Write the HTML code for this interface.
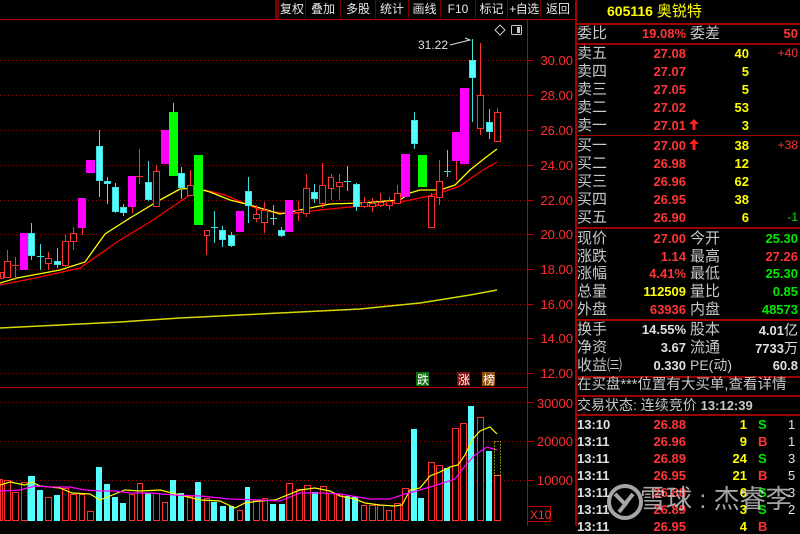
<!DOCTYPE html>
<html><head><meta charset="utf-8"><style>
*{margin:0;padding:0;box-sizing:border-box}
body{width:800px;height:526px;background:#000;overflow:hidden;position:relative;font-family:"Liberation Sans","Noto Sans CJK SC",sans-serif}
.t{position:absolute;white-space:nowrap;line-height:1}
.lb{color:#c8c8c8;font-size:15px}
.n{font-weight:bold;font-size:13px;text-align:right}
.r{color:#ff3535}.y{color:#ffff00}.g{color:#00e800}.w{color:#e0e0e0}
.hl{position:absolute;left:575px;width:225px;height:2px;background:#a00000}
.tb{position:absolute;top:0;height:19px;color:#e8e8e8;font-size:12px;line-height:19px;text-align:center;border-left:1px solid #700000;white-space:nowrap;overflow:hidden}
</style></head><body>
<svg width="575" height="526" style="position:absolute;left:0;top:0" xmlns="http://www.w3.org/2000/svg">
<g stroke="#a00000" stroke-width="1" stroke-dasharray="1 3">
<line x1="0" y1="60.5" x2="527" y2="60.5"/><line x1="0" y1="95.5" x2="527" y2="95.5"/><line x1="0" y1="130.5" x2="527" y2="130.5"/><line x1="0" y1="165.5" x2="527" y2="165.5"/><line x1="0" y1="200.5" x2="527" y2="200.5"/><line x1="0" y1="234.5" x2="527" y2="234.5"/><line x1="0" y1="269.5" x2="527" y2="269.5"/><line x1="0" y1="304.5" x2="527" y2="304.5"/><line x1="0" y1="338.5" x2="527" y2="338.5"/><line x1="0" y1="373.5" x2="527" y2="373.5"/>
<line x1="0" y1="402.5" x2="527" y2="402.5"/><line x1="0" y1="441.5" x2="527" y2="441.5"/><line x1="0" y1="480.5" x2="527" y2="480.5"/>
</g>
<line x1="0" y1="19.5" x2="575" y2="19.5" stroke="#c00000"/>
<line x1="0" y1="387.5" x2="527" y2="387.5" stroke="#c00000"/>
<line x1="527.5" y1="19" x2="527.5" y2="526" stroke="#c00000"/>
<rect x="275" y="0" width="3" height="19" fill="#800000"/>
<g stroke="#c00000"><line x1="527" y1="60.5" x2="533" y2="60.5"/><line x1="527" y1="95.5" x2="533" y2="95.5"/><line x1="527" y1="130.5" x2="533" y2="130.5"/><line x1="527" y1="165.5" x2="533" y2="165.5"/><line x1="527" y1="200.5" x2="533" y2="200.5"/><line x1="527" y1="234.5" x2="533" y2="234.5"/><line x1="527" y1="269.5" x2="533" y2="269.5"/><line x1="527" y1="304.5" x2="533" y2="304.5"/><line x1="527" y1="338.5" x2="533" y2="338.5"/><line x1="527" y1="373.5" x2="533" y2="373.5"/><line x1="527" y1="402.5" x2="533" y2="402.5"/><line x1="527" y1="441.5" x2="533" y2="441.5"/><line x1="527" y1="480.5" x2="533" y2="480.5"/></g>
<g fill="#ff3030" font-family="Liberation Sans" font-size="13" text-anchor="end">
<text x="573" y="65">30.00</text><text x="573" y="100">28.00</text><text x="573" y="135">26.00</text><text x="573" y="170">24.00</text><text x="573" y="205">22.00</text><text x="573" y="239">20.00</text><text x="573" y="274">18.00</text><text x="573" y="309">16.00</text><text x="573" y="343">14.00</text><text x="573" y="378">12.00</text>
<text x="573" y="408">30000</text><text x="573" y="446">20000</text><text x="573" y="485">10000</text>
</g>
<rect x="527.5" y="506.5" width="23" height="15" fill="none" stroke="#c00000"/>
<text x="530" y="519" fill="#ff3030" font-size="12" font-family="Liberation Sans">X10</text>
<polyline fill="none" stroke="#d8d800" stroke-width="1.5" points="0,328 60,325 120,322 180,318 240,315 300,312 360,309 420,303 470,295 497,290"/>
<polyline fill="none" stroke="#ff0000" stroke-width="1.3" points="0,285 40,277 80,268 120,240 150,222 175,205 190,195 205,190 225,195 260,210 290,214 320,210 350,207 380,205 400,202 420,198 440,193 460,186 480,172 497,162"/>
<polyline fill="none" stroke="#ffff00" stroke-width="1.3" points="0,283 17,278 60,270 85,262 105,234 130,218 160,200 180,189 195,188 210,192 230,200 250,205 280,214 300,210 330,204 360,203 400,200 410,193 420,190 440,190 455,185 470,170 485,158 497,149"/>
<g stroke-width="1">
<g stroke="#ff3030" fill="#000">
<rect x="0.5" y="272.5" width="3" height="6"/>
<line x1="7.5" y1="250" x2="7.5" y2="261"/><rect x="4.5" y="261.5" width="6" height="16"/>
<line x1="15.5" y1="257" x2="15.5" y2="280"/><line x1="12" y1="265.5" x2="19" y2="265.5"/>
<line x1="48.5" y1="252" x2="48.5" y2="270"/><rect x="45.5" y="258.5" width="6" height="5"/>
<line x1="65.5" y1="235" x2="65.5" y2="267"/><rect x="62.5" y="241.5" width="6" height="24"/>
<line x1="73.5" y1="227" x2="73.5" y2="250"/><rect x="70.5" y="233.5" width="6" height="8"/>
<line x1="82.5" y1="228" x2="82.5" y2="235"/>
<line x1="132.5" y1="207" x2="132.5" y2="213"/>
<line x1="139.5" y1="149" x2="139.5" y2="184"/><line x1="136" y1="176.5" x2="143" y2="176.5"/>
<line x1="156.5" y1="165" x2="156.5" y2="206"/><rect x="153.5" y="171.5" width="6" height="35"/>
<line x1="190.5" y1="170" x2="190.5" y2="195"/><rect x="187.5" y="185.5" width="6" height="10"/>
<line x1="206.5" y1="235" x2="206.5" y2="255"/><rect x="204.5" y="230.5" width="5" height="5"/>
<line x1="256.5" y1="205" x2="256.5" y2="222"/><rect x="253.5" y="214.5" width="6" height="4"/>
<line x1="264.5" y1="202" x2="264.5" y2="233"/><rect x="261.5" y="210.5" width="6" height="12"/>
<line x1="298.5" y1="201" x2="298.5" y2="221"/><rect x="295.5" y="210.5" width="6" height="2"/>
<line x1="306.5" y1="174" x2="306.5" y2="217"/><rect x="303.5" y="188.5" width="6" height="25"/>
<line x1="322.5" y1="163" x2="322.5" y2="208"/><rect x="319.5" y="185.5" width="6" height="18"/>
<line x1="331.5" y1="174" x2="331.5" y2="200"/><rect x="328.5" y="177.5" width="5" height="11"/>
<line x1="339.5" y1="174" x2="339.5" y2="200"/><rect x="336.5" y="182.5" width="6" height="4"/>
<line x1="364.5" y1="197" x2="364.5" y2="208"/><rect x="361.5" y="202.5" width="6" height="4"/>
<line x1="372.5" y1="198" x2="372.5" y2="212"/><rect x="369.5" y="203.5" width="6" height="3"/>
<line x1="380.5" y1="193" x2="380.5" y2="207"/><rect x="378.5" y="202.5" width="5" height="3"/>
<line x1="389.5" y1="197" x2="389.5" y2="210"/><rect x="386.5" y="201.5" width="6" height="4"/>
<line x1="397.5" y1="185" x2="397.5" y2="203"/><rect x="394.5" y="193.5" width="6" height="10"/>
<line x1="431.5" y1="193" x2="431.5" y2="228"/><rect x="428.5" y="196.5" width="6" height="31"/>
<line x1="439.5" y1="160" x2="439.5" y2="205"/><rect x="436.5" y="181.5" width="6" height="16"/>
<line x1="456.5" y1="161" x2="456.5" y2="180"/>
<line x1="480.5" y1="43" x2="480.5" y2="135"/><rect x="477.5" y="95.5" width="6" height="33"/>
<line x1="497.5" y1="108" x2="497.5" y2="141"/><rect x="494.5" y="112.5" width="6" height="29"/>
</g>
<g fill="#ff00ff">
<rect x="20" y="233" width="8" height="37"/><rect x="78" y="198" width="8" height="30"/><rect x="86" y="160" width="9" height="13"/><rect x="128" y="176" width="8" height="31"/><rect x="161" y="130" width="8" height="34"/><rect x="236" y="211" width="8" height="21"/><rect x="285" y="200" width="8" height="32"/><rect x="401" y="154" width="9" height="43"/><rect x="452" y="132" width="8" height="29"/><rect x="460" y="88" width="9" height="76"/>
</g>
<g fill="#00ff00"><rect x="169" y="112" width="9" height="64"/><rect x="194" y="155" width="9" height="70"/><rect x="418" y="155" width="9" height="32"/></g>
<g stroke="#40e0e0" fill="#54ffff">
<line x1="31.5" y1="223" x2="31.5" y2="260"/><rect x="28.5" y="233.5" width="6" height="22"/>
<line x1="40.5" y1="244" x2="40.5" y2="270"/><line x1="37" y1="256.5" x2="44" y2="256.5"/>
<line x1="57.5" y1="248" x2="57.5" y2="268"/><rect x="54.5" y="261.5" width="6" height="3"/>
<line x1="99.5" y1="130" x2="99.5" y2="197"/><rect x="96.5" y="146.5" width="6" height="34"/>
<line x1="107.5" y1="177" x2="107.5" y2="204"/><rect x="104.5" y="181.5" width="6" height="2"/>
<line x1="115.5" y1="183" x2="115.5" y2="213"/><rect x="112.5" y="187.5" width="6" height="24"/>
<line x1="123.5" y1="204" x2="123.5" y2="216"/><rect x="120.5" y="207.5" width="6" height="5"/>
<line x1="148.5" y1="161" x2="148.5" y2="201"/><rect x="145.5" y="182.5" width="6" height="17"/>
<line x1="173.5" y1="103" x2="173.5" y2="112"/>
<line x1="181.5" y1="167" x2="181.5" y2="199"/><rect x="178.5" y="173.5" width="6" height="14"/>
<line x1="214.5" y1="211" x2="214.5" y2="243"/><line x1="211" y1="227.5" x2="218" y2="227.5"/>
<line x1="222.5" y1="226" x2="222.5" y2="247"/><rect x="219.5" y="230.5" width="6" height="9"/>
<line x1="231.5" y1="232" x2="231.5" y2="247"/><rect x="228.5" y="235.5" width="6" height="10"/>
<line x1="248.5" y1="177" x2="248.5" y2="223"/><rect x="245.5" y="191.5" width="6" height="14"/>
<line x1="273.5" y1="205" x2="273.5" y2="225"/><line x1="270" y1="218.5" x2="277" y2="218.5"/>
<line x1="281.5" y1="227" x2="281.5" y2="237"/><rect x="278.5" y="230.5" width="6" height="5"/>
<line x1="314.5" y1="184" x2="314.5" y2="203"/><rect x="311.5" y="192.5" width="6" height="6"/>
<line x1="347.5" y1="166" x2="347.5" y2="191"/><line x1="344" y1="181.5" x2="351" y2="181.5"/>
<line x1="356.5" y1="183" x2="356.5" y2="211"/><rect x="353.5" y="184.5" width="6" height="22"/>
<line x1="414.5" y1="112" x2="414.5" y2="149"/><rect x="411.5" y="120.5" width="6" height="23"/>
<line x1="447.5" y1="150" x2="447.5" y2="177"/><line x1="444" y1="171.5" x2="451" y2="171.5"/>
<line x1="472.5" y1="39" x2="472.5" y2="122"/><rect x="469.5" y="60.5" width="6" height="17"/>
<line x1="489.5" y1="109" x2="489.5" y2="139"/><rect x="486.5" y="122.5" width="6" height="9"/>
</g>
</g>
<text x="418" y="49" fill="#e0e0e0" font-size="12" font-family="Liberation Sans">31.22</text>
<polyline points="450,45 470,40 465,38" fill="none" stroke="#e0e0e0"/>
<path d="M500,25 L505,30 L500,35 L495,30 Z" fill="none" stroke="#c8c8c8"/>
<rect x="511.5" y="25.5" width="10" height="9" fill="#000" stroke="#c8c8c8" rx="1"/><rect x="517" y="27" width="3" height="6" fill="#c8c8c8"/>
<rect x="416" y="372" width="13" height="14" fill="#107010"/><text x="417" y="384" fill="#fff" font-size="12">跌</text>
<rect x="457" y="372" width="13" height="14" fill="#801010"/><text x="458" y="384" fill="#fff" font-size="12">涨</text>
<rect x="482" y="372" width="13" height="14" fill="#905010"/><text x="483" y="384" fill="#fff" font-size="12">榜</text>
<g stroke="#ff3030" fill="#000">
<rect x="0.5" y="479.5" width="2" height="41"/><rect x="4.5" y="480.5" width="6" height="40"/><rect x="12.5" y="492.5" width="6" height="28"/><rect x="21.5" y="482.5" width="6" height="38"/><rect x="45.5" y="497.5" width="6" height="23"/><rect x="62.5" y="488.5" width="6" height="32"/><rect x="70.5" y="494.5" width="6" height="26"/><rect x="79.5" y="494.5" width="5" height="26"/><rect x="87.5" y="511.5" width="6" height="9"/><rect x="129.5" y="494.5" width="5" height="26"/><rect x="137.5" y="483.5" width="5" height="37"/><rect x="153.5" y="493.5" width="6" height="27"/><rect x="162.5" y="502.5" width="5" height="18"/><rect x="187.5" y="496.5" width="5" height="24"/><rect x="204.5" y="498.5" width="5" height="22"/><rect x="237.5" y="510.5" width="5" height="10"/><rect x="253.5" y="500.5" width="6" height="20"/><rect x="262.5" y="498.5" width="5" height="22"/><rect x="286.5" y="483.5" width="6" height="37"/>
<rect x="296.5" y="489.5" width="6" height="31"/><rect x="304.5" y="485.5" width="6" height="35"/><rect x="320.5" y="486.5" width="6" height="34"/><rect x="328.5" y="493.5" width="6" height="27"/><rect x="336.5" y="494.5" width="6" height="26"/><rect x="361.5" y="505.5" width="5" height="15"/><rect x="369.5" y="505.5" width="6" height="15"/><rect x="377.5" y="505.5" width="6" height="15"/><rect x="386.5" y="510.5" width="5" height="10"/><rect x="394.5" y="503.5" width="6" height="17"/><rect x="402.5" y="488.5" width="6" height="32"/><rect x="428.5" y="462.5" width="6" height="58"/><rect x="436.5" y="465.5" width="6" height="55"/><rect x="452.5" y="428.5" width="6" height="92"/><rect x="460.5" y="423.5" width="6" height="97"/><rect x="477.5" y="417.5" width="6" height="103"/><rect x="494.5" y="475.5" width="6" height="45"/>
</g>
<g fill="#54ffff">
<rect x="28" y="476" width="7" height="45"/><rect x="37" y="490" width="6" height="31"/><rect x="54" y="495" width="6" height="26"/><rect x="96" y="467" width="6" height="54"/><rect x="104" y="484" width="6" height="37"/><rect x="112" y="497" width="6" height="24"/><rect x="120" y="503" width="6" height="18"/><rect x="145" y="493" width="6" height="28"/><rect x="170" y="480" width="6" height="41"/><rect x="178" y="493" width="6" height="28"/><rect x="195" y="482" width="6" height="39"/><rect x="211" y="502" width="6" height="19"/><rect x="220" y="506" width="6" height="15"/><rect x="229" y="506" width="5" height="15"/><rect x="245" y="487" width="5" height="34"/><rect x="270" y="504" width="6" height="17"/><rect x="279" y="504" width="6" height="17"/><rect x="312" y="492" width="6" height="29"/><rect x="345" y="496" width="5" height="25"/><rect x="352" y="497" width="6" height="24"/><rect x="411" y="429" width="6" height="92"/><rect x="418" y="498" width="6" height="23"/><rect x="444" y="468" width="6" height="53"/><rect x="468" y="406" width="6" height="115"/><rect x="486" y="451" width="6" height="70"/>
</g>
<polyline fill="none" stroke="#ffff00" stroke-width="1.2" points="0,485 10,482 25,485 32,482 40,486 60,488 72,493 90,494 100,500 110,496 125,490 140,491 160,490 180,495 200,500 220,501 235,508 245,503 260,501 275,500 300,490 315,488 330,491 340,496 355,499 365,503 380,505 395,506 402,505 410,490 420,488 430,476 440,472 450,467 458,465 465,455 472,440 480,431 490,427 497,434"/>
<polyline fill="none" stroke="#ff00ff" stroke-width="1.2" points="0,491 20,490 35,486 50,487 70,487 85,490 100,491 115,491 130,493 150,493 175,495 200,496 230,499 260,500 280,501 300,493 320,493 340,494 370,499 390,499 405,494 420,490 440,484 455,479 465,466 475,455 487,447 497,450"/>
<rect x="494.5" y="441.5" width="6" height="34" fill="none" stroke="#ffff00" stroke-dasharray="1 2"/>
</svg>

<div class="tb" style="left:278px;width:27px">复权</div>
<div class="tb" style="left:305px;width:35px">叠加</div>
<div class="tb" style="left:340px;width:35px">多股</div>
<div class="tb" style="left:375px;width:33px">统计</div>
<div class="tb" style="left:408px;width:32px">画线</div>
<div class="tb" style="left:440px;width:35px">F10</div>
<div class="tb" style="left:475px;width:32px">标记</div>
<div class="tb" style="left:507px;width:33px;letter-spacing:-0.5px">+自选</div>
<div class="tb" style="left:540px;width:35px">返回</div>

<div style="position:absolute;left:575px;top:0;width:2px;height:526px;background:#a00000"></div>
<div class="t y" style="left:607px;top:4px;font-size:14px;font-weight:bold">605116 <span style="font-weight:normal;font-size:15px">奥锐特</span></div>
<div class="hl" style="top:23px"></div>
<div class="t lb" style="left:577px;top:26px">委比</div><div class="t n r" style="left:630px;width:56px;top:27px">19.08%</div><div class="t lb" style="left:690px;top:26px">委差</div><div class="t n r" style="left:740px;width:58px;top:27px">50</div>
<div class="hl" style="top:43px"></div>

<div class="t lb" style="left:577px;top:46px">卖五</div><div class="t n r" style="left:620px;width:66px;top:47px">27.08</div><div class="t n y" style="left:700px;width:49px;top:47px">40</div><div class="t r" style="left:760px;width:38px;top:47px;font-size:12px;text-align:right">+40</div>
<div class="t lb" style="left:577px;top:64px">卖四</div><div class="t n r" style="left:620px;width:66px;top:65px">27.07</div><div class="t n y" style="left:700px;width:49px;top:65px">5</div>
<div class="t lb" style="left:577px;top:82px">卖三</div><div class="t n r" style="left:620px;width:66px;top:83px">27.05</div><div class="t n y" style="left:700px;width:49px;top:83px">5</div>
<div class="t lb" style="left:577px;top:100px">卖二</div><div class="t n r" style="left:620px;width:66px;top:101px">27.02</div><div class="t n y" style="left:700px;width:49px;top:101px">53</div>
<div class="t lb" style="left:577px;top:118px">卖一</div><div class="t n r" style="left:620px;width:66px;top:119px">27.01</div><svg width="10" height="12" style="position:absolute;left:689px;top:119px"><path d="M5,0 L10,5 L6.5,5 L6.5,11 L3.5,11 L3.5,5 L0,5 Z" fill="#ff2020"/></svg><div class="t n y" style="left:700px;width:49px;top:119px">3</div>
<div class="hl" style="top:135px;height:1px"></div>
<div class="t lb" style="left:577px;top:138px">买一</div><div class="t n r" style="left:620px;width:66px;top:139px">27.00</div><svg width="10" height="12" style="position:absolute;left:689px;top:139px"><path d="M5,0 L10,5 L6.5,5 L6.5,11 L3.5,11 L3.5,5 L0,5 Z" fill="#ff2020"/></svg><div class="t n y" style="left:700px;width:49px;top:139px">38</div><div class="t r" style="left:760px;width:38px;top:139px;font-size:12px;text-align:right">+38</div>
<div class="t lb" style="left:577px;top:156px">买二</div><div class="t n r" style="left:620px;width:66px;top:157px">26.98</div><div class="t n y" style="left:700px;width:49px;top:157px">12</div>
<div class="t lb" style="left:577px;top:174px">买三</div><div class="t n r" style="left:620px;width:66px;top:175px">26.96</div><div class="t n y" style="left:700px;width:49px;top:175px">62</div>
<div class="t lb" style="left:577px;top:192px">买四</div><div class="t n r" style="left:620px;width:66px;top:193px">26.95</div><div class="t n y" style="left:700px;width:49px;top:193px">38</div>
<div class="t lb" style="left:577px;top:210px">买五</div><div class="t n r" style="left:620px;width:66px;top:211px">26.90</div><div class="t n y" style="left:700px;width:49px;top:211px">6</div><div class="t g" style="left:760px;width:38px;top:211px;font-size:12px;text-align:right">-1</div>
<div class="hl" style="top:227px"></div>

<div class="t lb" style="left:577px;top:231px">现价</div><div class="t n r" style="left:620px;width:66px;top:232px">27.00</div><div class="t lb" style="left:690px;top:231px">今开</div><div class="t n g" style="left:730px;width:68px;top:232px">25.30</div>
<div class="t lb" style="left:577px;top:249px">涨跌</div><div class="t n r" style="left:620px;width:66px;top:250px">1.14</div><div class="t lb" style="left:690px;top:249px">最高</div><div class="t n r" style="left:730px;width:68px;top:250px">27.26</div>
<div class="t lb" style="left:577px;top:266px">涨幅</div><div class="t n r" style="left:620px;width:66px;top:267px">4.41%</div><div class="t lb" style="left:690px;top:266px">最低</div><div class="t n g" style="left:730px;width:68px;top:267px">25.30</div>
<div class="t lb" style="left:577px;top:284px">总量</div><div class="t n y" style="left:620px;width:66px;top:285px">112509</div><div class="t lb" style="left:690px;top:284px">量比</div><div class="t n g" style="left:730px;width:68px;top:285px">0.85</div>
<div class="t lb" style="left:577px;top:302px">外盘</div><div class="t n r" style="left:620px;width:66px;top:303px">63936</div><div class="t lb" style="left:690px;top:302px">内盘</div><div class="t n g" style="left:730px;width:68px;top:303px">48573</div>
<div class="hl" style="top:319px"></div>

<div class="t lb" style="left:577px;top:322px">换手</div><div class="t n w" style="left:620px;width:66px;top:323px">14.55%</div><div class="t lb" style="left:690px;top:322px">股本</div><div class="t n w" style="left:730px;width:68px;top:323px">4.01<span style="font-weight:normal;font-size:14px">亿</span></div>
<div class="t lb" style="left:577px;top:340px">净资</div><div class="t n w" style="left:620px;width:66px;top:341px">3.67</div><div class="t lb" style="left:690px;top:340px">流通</div><div class="t n w" style="left:730px;width:68px;top:341px">7733<span style="font-weight:normal;font-size:14px">万</span></div>
<div class="t lb" style="left:577px;top:358px">收益㈢</div><div class="t n w" style="left:620px;width:66px;top:359px">0.330</div><div class="t lb" style="left:690px;top:358px;font-size:14px">PE(动)</div><div class="t n w" style="left:730px;width:68px;top:359px">60.8</div>
<div class="hl" style="top:376px"></div>
<div class="t lb" style="left:577px;top:378px;font-size:14.5px">在买盘***位置有大买单,查看详情</div>
<div class="hl" style="top:395px"></div>
<div class="t lb" style="left:577px;top:398px;font-size:14px">交易状态: 连续竞价 <span style="font-weight:bold;font-size:13px">13:12:39</span></div>
<div class="hl" style="top:414px"></div>

<div class="t n w" style="left:577px;top:418px;text-align:left">13:10</div><div class="t n r" style="left:620px;width:66px;top:418px">26.88</div><div class="t n y" style="left:700px;width:47px;top:418px">1</div><div class="t n g" style="left:758px;top:418px">S</div><div class="t w" style="left:788px;top:418px;font-size:13px">1</div>
<div class="t n w" style="left:577px;top:435px;text-align:left">13:11</div><div class="t n r" style="left:620px;width:66px;top:435px">26.96</div><div class="t n y" style="left:700px;width:47px;top:435px">9</div><div class="t n r" style="left:758px;top:435px">B</div><div class="t w" style="left:788px;top:435px;font-size:13px">1</div>
<div class="t n w" style="left:577px;top:452px;text-align:left">13:11</div><div class="t n r" style="left:620px;width:66px;top:452px">26.89</div><div class="t n y" style="left:700px;width:47px;top:452px">24</div><div class="t n g" style="left:758px;top:452px">S</div><div class="t w" style="left:788px;top:452px;font-size:13px">3</div>
<div class="t n w" style="left:577px;top:469px;text-align:left">13:11</div><div class="t n r" style="left:620px;width:66px;top:469px">26.95</div><div class="t n y" style="left:700px;width:47px;top:469px">21</div><div class="t n r" style="left:758px;top:469px">B</div><div class="t w" style="left:788px;top:469px;font-size:13px">5</div>
<div class="t n w" style="left:577px;top:486px;text-align:left">13:11</div><div class="t n r" style="left:620px;width:66px;top:486px">26.88</div><div class="t n y" style="left:700px;width:47px;top:486px">6</div><div class="t n g" style="left:758px;top:486px">S</div><div class="t w" style="left:788px;top:486px;font-size:13px">3</div>
<div class="t n w" style="left:577px;top:503px;text-align:left">13:11</div><div class="t n r" style="left:620px;width:66px;top:503px">26.89</div><div class="t n y" style="left:700px;width:47px;top:503px">3</div><div class="t n g" style="left:758px;top:503px">S</div><div class="t w" style="left:788px;top:503px;font-size:13px">2</div>
<div class="t n w" style="left:577px;top:520px;text-align:left">13:11</div><div class="t n r" style="left:620px;width:66px;top:520px">26.95</div><div class="t n y" style="left:700px;width:47px;top:520px">4</div><div class="t n r" style="left:758px;top:520px">B</div>

<svg width="40" height="40" style="position:absolute;left:605px;top:482px"><circle cx="20" cy="20" r="16" fill="none" stroke="rgba(220,220,220,0.75)" stroke-width="4"/><path d="M10,12 L20,22 M20,22 L28,12 M14,30 L22,20" stroke="rgba(220,220,220,0.75)" stroke-width="4" fill="none"/></svg>
<div class="t" style="left:640px;top:486px;font-size:26px;color:rgba(220,220,220,0.75)">雪球 : 杰睿李</div>
</body></html>
